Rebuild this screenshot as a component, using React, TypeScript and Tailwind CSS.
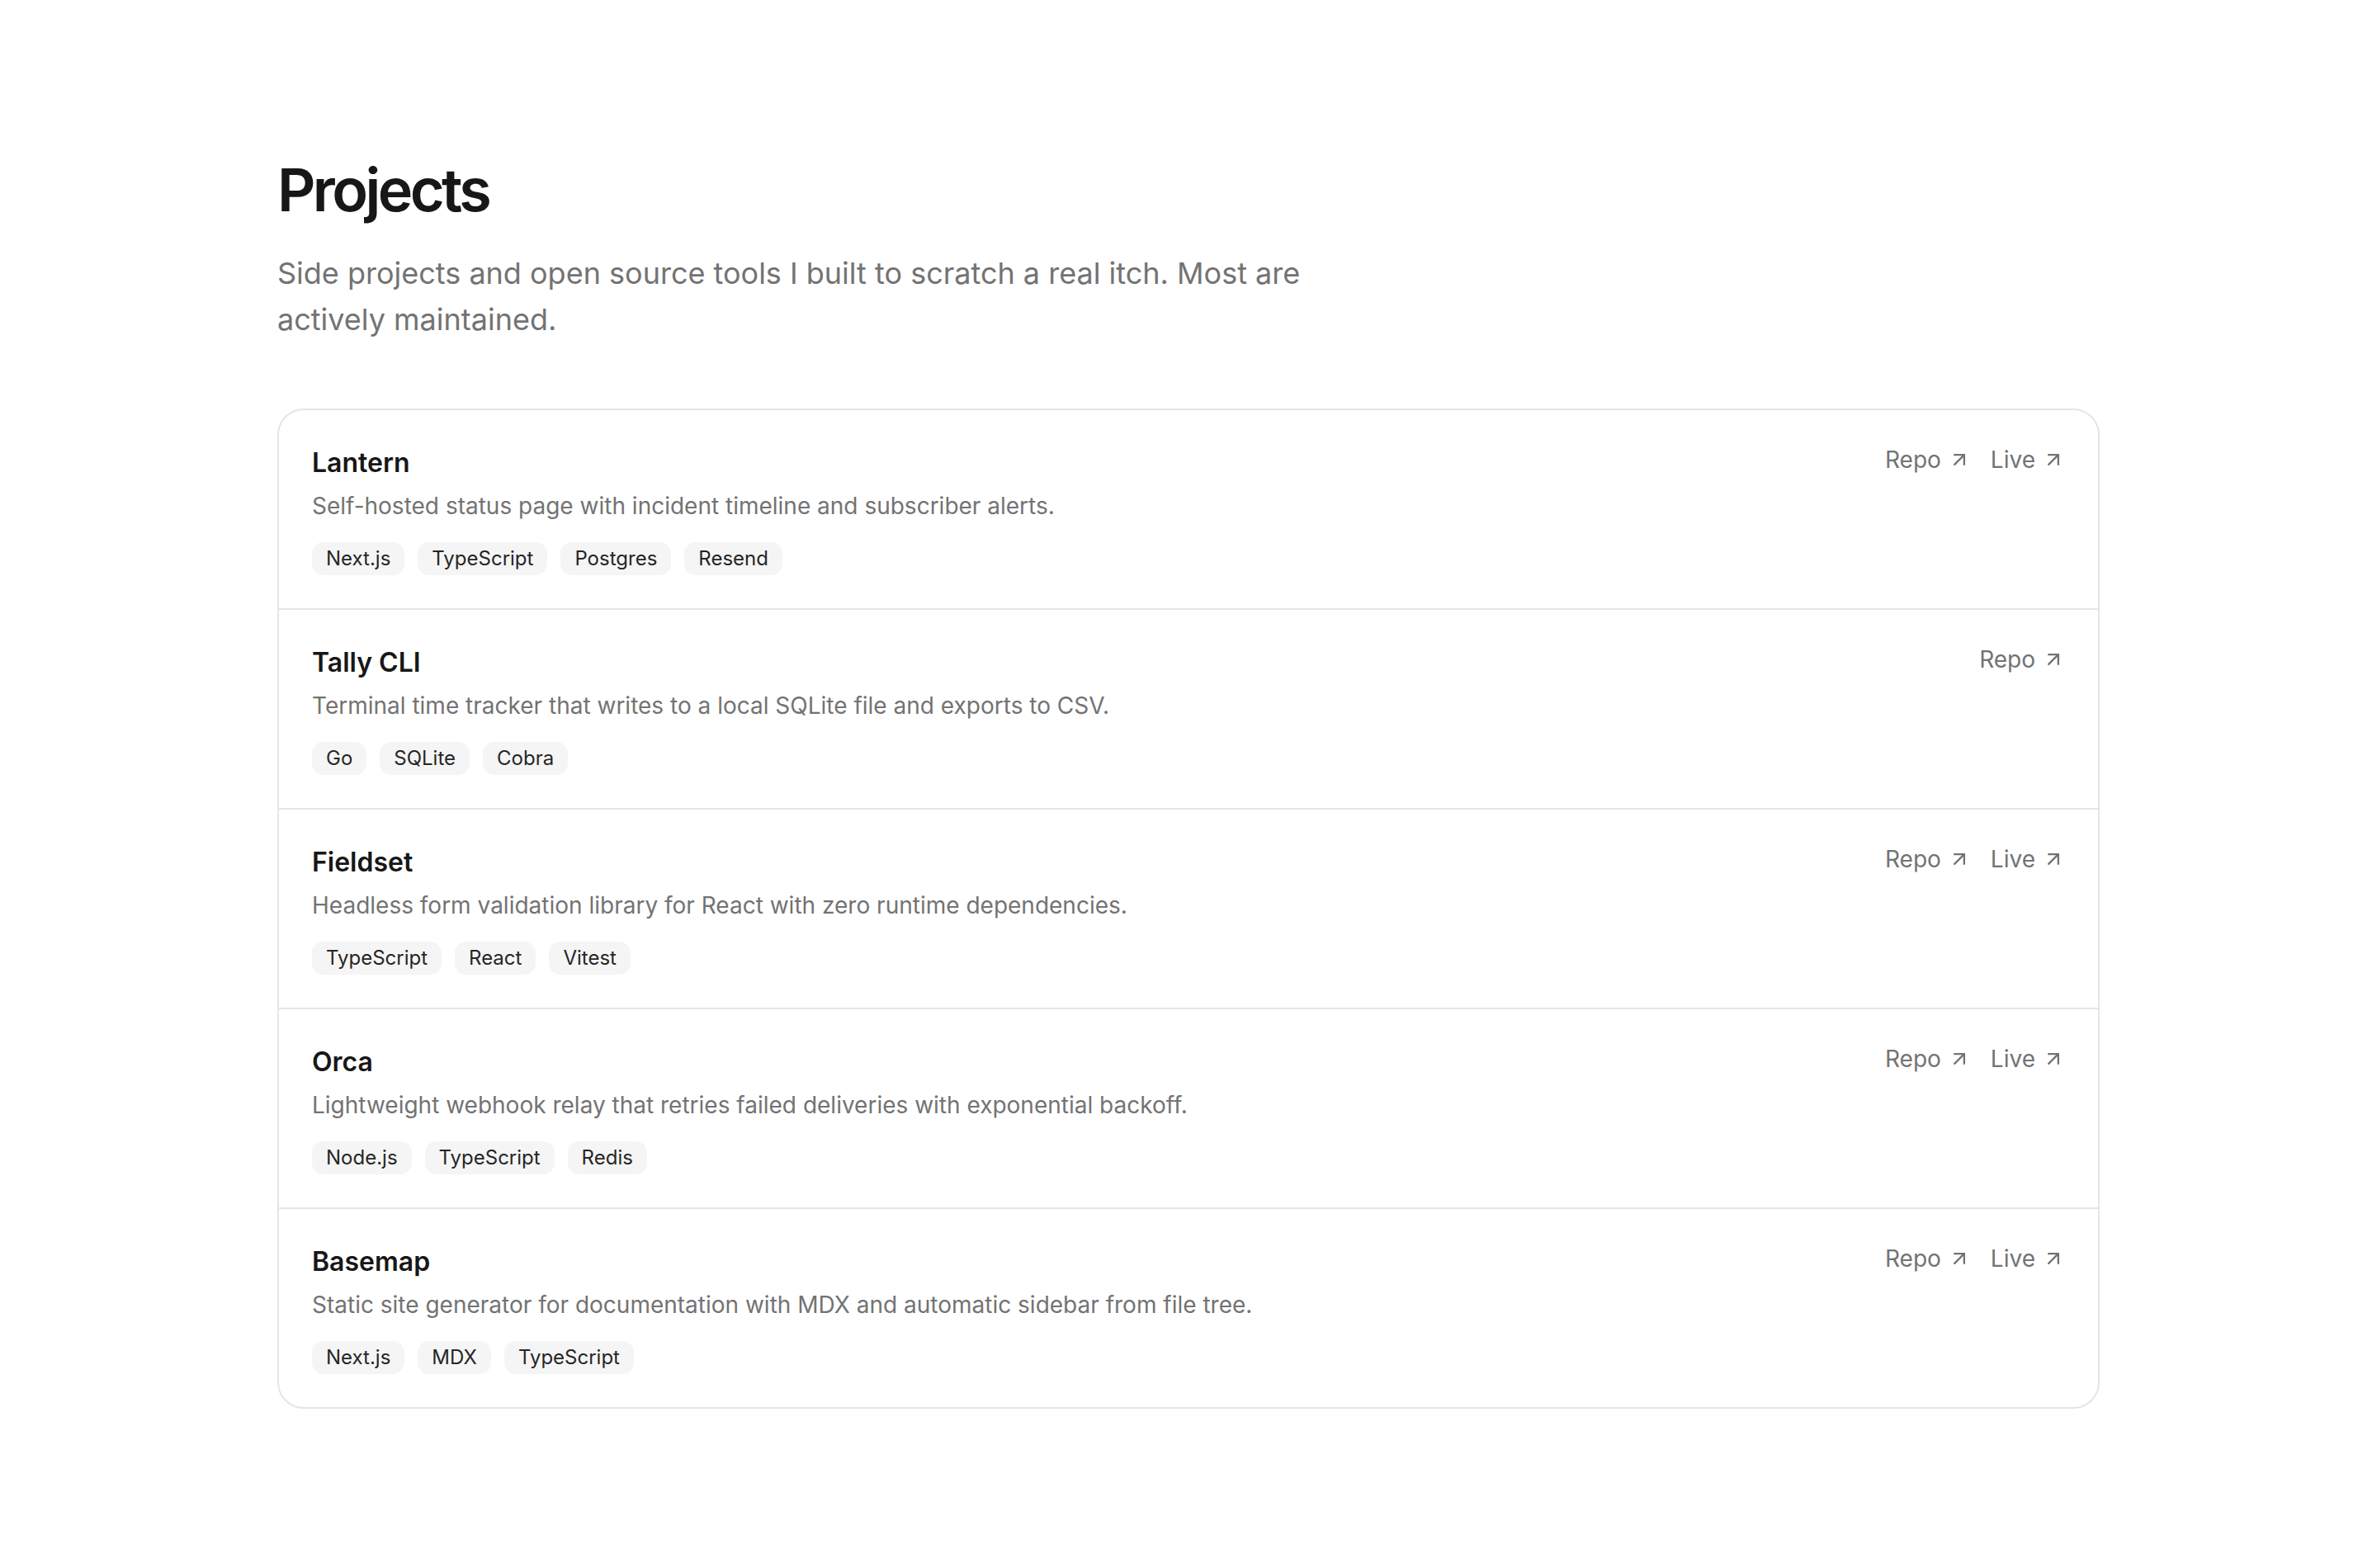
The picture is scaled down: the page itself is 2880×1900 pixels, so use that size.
import React from 'react';
import { ArrowUpRight } from 'lucide-react';

interface Project {
  name: string;
  description: string;
  tags: string[];
  repo?: string;
  live?: string;
}

const projects: Project[] = [
  {
    name: 'Lantern',
    description: 'Self-hosted status page with incident timeline and subscriber alerts.',
    tags: ['Next.js', 'TypeScript', 'Postgres', 'Resend'],
    repo: '#',
    live: '#',
  },
  {
    name: 'Tally CLI',
    description: 'Terminal time tracker that writes to a local SQLite file and exports to CSV.',
    tags: ['Go', 'SQLite', 'Cobra'],
    repo: '#',
  },
  {
    name: 'Fieldset',
    description: 'Headless form validation library for React with zero runtime dependencies.',
    tags: ['TypeScript', 'React', 'Vitest'],
    repo: '#',
    live: '#',
  },
  {
    name: 'Orca',
    description: 'Lightweight webhook relay that retries failed deliveries with exponential backoff.',
    tags: ['Node.js', 'TypeScript', 'Redis'],
    repo: '#',
    live: '#',
  },
  {
    name: 'Basemap',
    description: 'Static site generator for documentation with MDX and automatic sidebar from file tree.',
    tags: ['Next.js', 'MDX', 'TypeScript'],
    repo: '#',
    live: '#',
  },
];

const ExternalLink: React.FC<{ href: string; label: string }> = ({ href, label }) => (
  <a
    href={href}
    className="flex items-center gap-2 text-[28px] leading-[40px] text-neutral-500 hover:text-neutral-900"
  >
    {label}
    <ArrowUpRight className="h-7 w-7" strokeWidth={2} />
  </a>
);

const ProjectRow: React.FC<{ project: Project }> = ({ project }) => (
  <li className="flex items-start justify-between gap-12 px-10 py-10">
    <div className="min-w-0">
      <h2 className="text-[32px] font-semibold leading-[48px] text-neutral-900">{project.name}</h2>
      <p className="mt-2 text-[28px] leading-[40px] text-neutral-500">{project.description}</p>
      <div className="mt-6 flex flex-wrap gap-4">
        {project.tags.map((tag) => (
          <span
            key={tag}
            className="rounded-[14px] bg-neutral-100 px-[17px] py-1 text-[24px] leading-[32px] text-neutral-800"
          >
            {tag}
          </span>
        ))}
      </div>
    </div>
    <div className="flex shrink-0 items-center gap-6">
      {project.repo && <ExternalLink href={project.repo} label="Repo" />}
      {project.live && <ExternalLink href={project.live} label="Live" />}
    </div>
  </li>
);

export default function App() {
  return (
    <div
      className="min-h-screen bg-white antialiased"
      style={{ fontFamily: 'Inter, "Noto Sans", sans-serif' }}
    >
      <main className="mx-auto w-[2208px] pt-[190px] pb-48">
        <h1 className="text-[72px] font-semibold leading-[80px] tracking-[-0.05em] text-neutral-900">
          Projects
        </h1>
        <p className="mt-[33px] max-w-[1344px] text-[36px] leading-[56px] text-neutral-500">
          Side projects and open source tools I built to scratch a real itch. Most are actively
          maintained.
        </p>

        <ul className="mt-[80px] divide-y-2 divide-neutral-200 rounded-[32px] border-2 border-neutral-200">
          {projects.map((project) => (
            <ProjectRow key={project.name} project={project} />
          ))}
        </ul>
      </main>
    </div>
  );
}
